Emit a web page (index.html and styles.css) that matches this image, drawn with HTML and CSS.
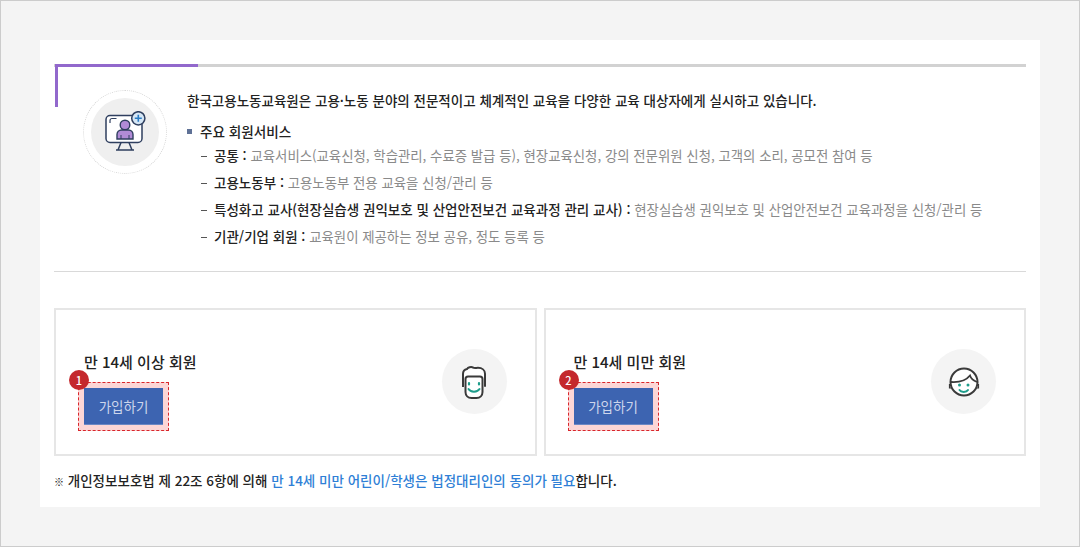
FILE: index.html
```html
<!DOCTYPE html>
<html lang="ko">
<head>
<meta charset="utf-8">
<title>회원가입</title>
<link rel="stylesheet" href="styles.css">
</head>
<body>
<div class="frame">
  <main class="panel">
    <section class="intro">
      <div class="emblem">
        <div class="emblem-disc">
          <svg width="42" height="42" viewBox="0 0 42 42" fill="none">
            <rect x="2" y="4.500" width="36" height="27" rx="4" fill="#fff" stroke="#2f3f5f" stroke-width="1.500"/>
            <path d="M6 12v-2.500a2 2 0 0 1 2-2h4.500" stroke="#2f3f5f" stroke-width="1.200"/>
            <circle cx="21" cy="14" r="4.800" fill="#b18bd6" stroke="#2f3f5f" stroke-width="1.400"/>
            <path d="M13 28v-4.500a4.500 4.500 0 0 1 4.500-4.500h7a4.500 4.500 0 0 1 4.500 4.500V28z" fill="#b18bd6" stroke="#2f3f5f" stroke-width="1.400"/>
            <path d="M17 24v4M25 24v4" stroke="#2f3f5f" stroke-width="1"/>
            <path d="M17 31.500l-3 7.500h14l-3-7.500M12 39h18" stroke="#2f3f5f" stroke-width="1.500"/>
            <circle cx="34.300" cy="7.300" r="6.600" fill="#d5e6f5" stroke="#2f3f5f" stroke-width="1.500"/>
            <path d="M34.300 3.800v7M30.800 7.300h7" stroke="#2b7cc4" stroke-width="1.600"/>
          </svg>
        </div>
      </div>
      <div class="intro-text">
        <p class="lead">한국고용노동교육원은 고용·노동 분야의 전문적이고 체계적인 교육을 다양한 교육 대상자에게 실시하고 있습니다.</p>
        <h2 class="svc-title">주요 회원서비스</h2>
        <ul class="svc-list">
          <li><b>공통 :</b> 교육서비스(교육신청, 학습관리, 수료증 발급 등), 현장교육신청, 강의 전문위원 신청, 고객의 소리, 공모전 참여 등</li>
          <li><b>고용노동부 :</b> 고용노동부 전용 교육을 신청/관리 등</li>
          <li><b>특성화고 교사(현장실습생 권익보호 및 산업안전보건 교육과정 관리 교사) :</b> 현장실습생 권익보호 및 산업안전보건 교육과정을 신청/관리 등</li>
          <li><b>기관/기업 회원 :</b> 교육원이 제공하는 정보 공유, 정도 등록 등</li>
        </ul>
      </div>
    </section>
    <section class="cards">
      <article class="card">
        <div class="card-main">
          <h3 class="card-title">만 14세 이상 회원</h3>
          <div class="mark">
            <span class="badge">1</span>
            <a class="join" href="#">가입하기</a>
          </div>
        </div>
        <div class="face">
          <svg width="26" height="34" viewBox="0 0 26 34" fill="none">
            <path d="M2 22V9c0-3 1.500-4.500 4-5 1-1.500 4-2.500 6-1.500 1 .8 3 .3 5 .3 4 0 7 2.500 7 6v13" fill="#fff" stroke="#3a3a3a" stroke-width="2"/>
            <path d="M4.500 14c0-1.500 1-2.500 2.500-2.500h12c1.500 0 2.500 1 2.500 2.500v13c0 3.500-2.500 6-6 6h-5c-3.500 0-6-2.500-6-6z" fill="#fff" stroke="#3a3a3a" stroke-width="2"/>
            <path d="M8 18v1.500M18 18v1.500" stroke="#1f9d8b" stroke-width="2.200" stroke-linecap="round"/>
            <path d="M7.500 24c2 3.500 9 3.500 11 0" stroke="#1f9d8b" stroke-width="2" stroke-linecap="round"/>
          </svg>
        </div>
      </article>
      <article class="card">
        <div class="card-main">
          <h3 class="card-title">만 14세 미만 회원</h3>
          <div class="mark">
            <span class="badge">2</span>
            <a class="join" href="#">가입하기</a>
          </div>
        </div>
        <div class="face">
          <svg width="32" height="32" viewBox="0 0 32 32" fill="none">
            <circle cx="16" cy="16" r="13.500" fill="#fff" stroke="#3a3a3a" stroke-width="2"/>
            <path d="M3 16c7 .5 15-1.500 19-6.500 1 3 3 5 7 6.500" stroke="#3a3a3a" stroke-width="1.800"/>
            <path d="M2.500 18.500H1.500v3.500h1.500M29.500 18.500h1v3.500H29" stroke="#3a3a3a" stroke-width="1.200"/>
            <circle cx="11.500" cy="19" r="1.500" fill="#1f9d8b"/>
            <circle cx="20" cy="19" r="1.500" fill="#1f9d8b"/>
            <path d="M11.500 24c1.500 2.500 7 2.500 8.500 0" stroke="#1f9d8b" stroke-width="2" stroke-linecap="round"/>
          </svg>
        </div>
      </article>
    </section>
    <p class="note"><span class="note-mark">※</span> 개인정보보호법 제 22조 6항에 의해 <em>만 14세 미만 어린이/학생은 법정대리인의 동의가 필요</em>합니다.</p>
  </main>
</div>
</body>
</html>
```

FILE: styles.css
```css
* { box-sizing: border-box; }
html, body { margin: 0; padding: 0; }
body {
  width: 1080px;
  height: 547px;
  overflow: hidden;
  font-family: "Noto Sans CJK KR", "Noto Sans", sans-serif;
  color: #333;
}
.frame {
  width: 1080px;
  height: 547px;
  padding: 39px;
  background: #f4f4f4;
  border: 1px solid #ccc;
}
.panel {
  height: 467px;
  padding: 24px 14px 0 14px;
  background: #fff;
}
.intro {
  position: relative;
  display: flex;
  height: 208px;
  border-top: 3px solid #d2d2d2;
  border-bottom: 1px solid #d9d9d9;
}
.intro::before {
  content: "";
  position: absolute;
  left: 1px;
  top: -3px;
  width: 140px;
  height: 40px;
  border-top: 3px solid #9268cc;
  border-left: 3px solid #9268cc;
}
.emblem {
  flex: none;
  width: 84px;
  height: 84px;
  margin: 23px 0 0 29px;
  padding: 7px;
  border: 1px dotted #d5d5d5;
  border-radius: 50%;
}
.emblem-disc {
  width: 68px;
  height: 68px;
  border-radius: 50%;
  background: #efefef;
  display: flex;
  align-items: center;
  justify-content: center;
}
.intro-text {
  margin-left: 20px;
  padding-top: 22px;
}
.lead {
  margin: 0;
  font-size: 13.500px;
  line-height: 22px;
  font-weight: 500;
  color: #222;
}
.svc-title {
  position: relative;
  margin: 9px 0 0;
  padding-left: 13px;
  font-size: 13.600px;
  line-height: 22px;
  font-weight: 500;
  color: #222;
}
.svc-title::before {
  content: "";
  position: absolute;
  left: 0;
  top: 9px;
  width: 5px;
  height: 5px;
  background: #5f7196;
}
.svc-list {
  list-style: none;
  margin: 0;
  padding: 0 0 0 13px;
  font-size: 13.400px;
  line-height: 27px;
  color: #8a8a8a;
}
.svc-list li {
  position: relative;
  padding-left: 14px;
  white-space: nowrap;
}
.svc-list li::before {
  content: "";
  position: absolute;
  left: 1px;
  top: 14px;
  width: 6px;
  height: 1px;
  background: #555;
}
.svc-list b {
  font-size: 13.500px;
  font-weight: 500;
  color: #222;
}
.cards {
  display: flex;
  gap: 7px;
  margin-top: 36px;
}
.card {
  flex: 1;
  height: 148px;
  display: flex;
  justify-content: space-between;
  padding: 40px 28px 0 28px;
  border: 2px solid #e6e6e6;
}
.card-title {
  margin: 0;
  font-size: 15px;
  line-height: 24px;
  font-weight: 500;
  color: #222;
}
.mark {
  position: relative;
  width: 91px;
  height: 49px;
  margin: 8px 0 0 -6px;
  padding: 5px;
  background: #fcd6d6;
  border: 1px dashed #d9262b;
}
.join {
  display: flex;
  align-items: center;
  justify-content: center;
  height: 37px;
  background: #3d64b1;
  color: #cdd6ec;
  font-size: 13.500px;
  text-decoration: none;
  border-bottom: 1px solid #6b88c4;
}
.badge {
  position: absolute;
  left: -10px;
  top: -13px;
  width: 20px;
  height: 20px;
  border-radius: 50%;
  background: #c4282d;
  color: #fff;
  font-size: 11px;
  font-weight: 500;
  line-height: 20px;
  text-align: center;
}
.face {
  flex: none;
  width: 65px;
  height: 65px;
  margin-top: -1px;
  border-radius: 50%;
  background: #f4f4f4;
  display: flex;
  align-items: center;
  justify-content: center;
}
.note {
  margin: 13px 0 0;
  font-size: 13.500px;
  line-height: 22px;
  font-weight: 500;
  color: #222;
}
.note-mark {
  font-size: 10px;
  font-weight: 900;
  color: #111;
}
.note em {
  font-style: normal;
  color: #2f7fd6;
}
```
